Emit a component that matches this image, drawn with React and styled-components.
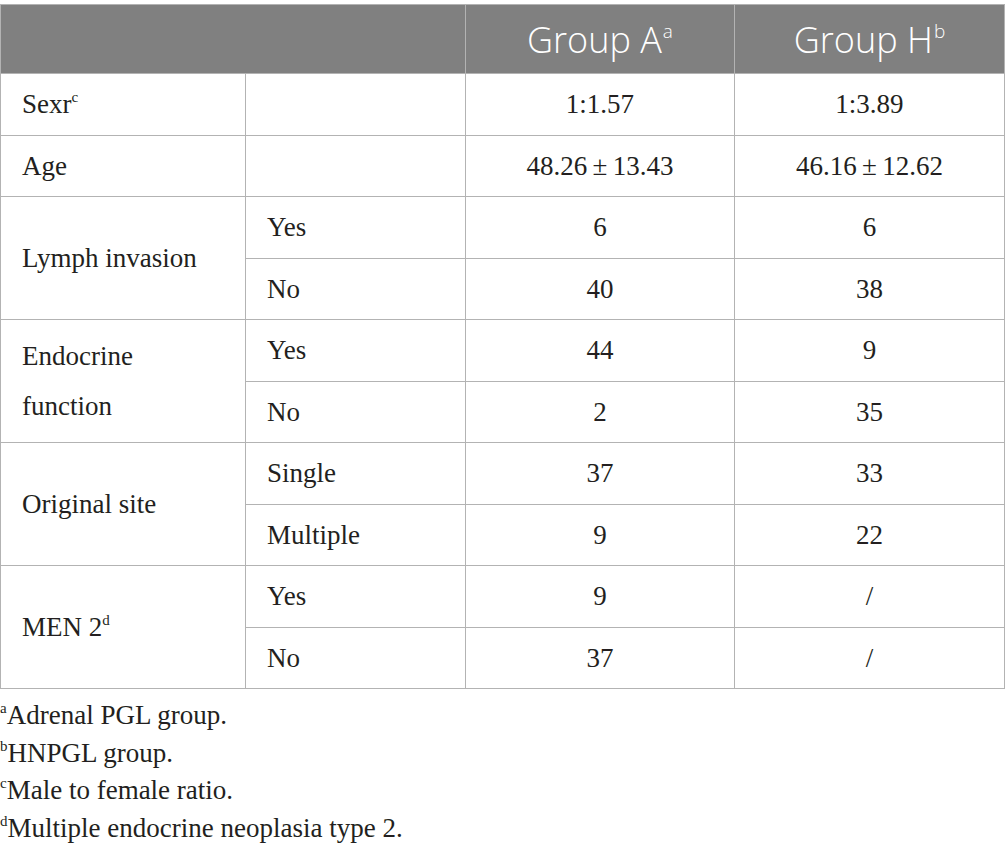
import React from 'react';
import styled, { createGlobalStyle } from 'styled-components';

const lineGray = '#b3b3b3';
const headGray = '#808080';

const GlobalStyle = createGlobalStyle`
  html, body {
    margin: 0;
    padding: 0;
    background: #ffffff;
  }
`;

const rows = [
  { label: 'Sexr', sup: 'c', items: [{ sub: '', a: '1:1.57', h: '1:3.89' }] },
  { label: 'Age', items: [{ sub: '', a: '48.26\u2009±\u200913.43', h: '46.16\u2009±\u200912.62' }] },
  {
    label: 'Lymph invasion',
    items: [
      { sub: 'Yes', a: '6', h: '6' },
      { sub: 'No', a: '40', h: '38' },
    ],
  },
  {
    label: 'Endocrine function',
    items: [
      { sub: 'Yes', a: '44', h: '9' },
      { sub: 'No', a: '2', h: '35' },
    ],
  },
  {
    label: 'Original site',
    items: [
      { sub: 'Single', a: '37', h: '33' },
      { sub: 'Multiple', a: '9', h: '22' },
    ],
  },
  {
    label: 'MEN 2',
    sup: 'd',
    items: [
      { sub: 'Yes', a: '9', h: '/' },
      { sub: 'No', a: '37', h: '/' },
    ],
  },
];

const notes = [
  { mark: 'a', text: 'Adrenal PGL group.' },
  { mark: 'b', text: 'HNPGL group.' },
  { mark: 'c', text: 'Male to female ratio.' },
  { mark: 'd', text: 'Multiple endocrine neoplasia type 2.' },
];

export default function App() {
  return (
    <Page>
      <GlobalStyle />
      <Table>
        <colgroup>
          <col style={{ width: 245 }} />
          <col style={{ width: 220 }} />
          <col style={{ width: 269 }} />
          <col style={{ width: 270 }} />
        </colgroup>
        <thead>
          <tr>
            <HeadCell colSpan={2} />
            <HeadCell divided>
              Group A<HeadSup>a</HeadSup>
            </HeadCell>
            <HeadCell divided>
              Group H<HeadSup>b</HeadSup>
            </HeadCell>
          </tr>
        </thead>
        <tbody>
          {rows.map((row) =>
            row.items.map((item, i) => (
              <Row key={row.label + i}>
                {i === 0 && (
                  <LabelCell rowSpan={row.items.length}>
                    {row.label}
                    {row.sup && <Sup>{row.sup}</Sup>}
                  </LabelCell>
                )}
                <LabelCell>{item.sub}</LabelCell>
                <ValueCell>{item.a}</ValueCell>
                <ValueCell>{item.h}</ValueCell>
              </Row>
            ))
          )}
        </tbody>
      </Table>
      <Notes>
        {notes.map((n) => (
          <Note key={n.mark}>
            <Sup>{n.mark}</Sup>
            {n.text}
          </Note>
        ))}
      </Notes>
    </Page>
  );
}

const Page = styled.div`
  width: 1005px;
  padding-top: 4px;
  font-family: "Liberation Serif", "Times New Roman", serif;
  color: #231f20;
`;

const Table = styled.table`
  width: 1005px;
  border-collapse: collapse;
  table-layout: fixed;
  border: 1px solid ${lineGray};
`;

const HeadCell = styled.th`
  height: 68px;
  padding: 0;
  background: ${headGray};
  color: #ffffff;
  font-family: "Open Sans", "Liberation Sans", sans-serif;
  font-weight: 300;
  font-size: 36px;
  text-align: center;
  vertical-align: middle;
  border: 1px solid ${lineGray};
  border-left: ${(p) => (p.divided ? `1px solid ${lineGray}` : 'none')};
`;

const HeadSup = styled.sup`
  font-size: 19px;
  vertical-align: 15px;
  line-height: 0;
  margin-left: 1px;
`;

const Row = styled.tr`
  height: 61.5px;
`;

const Cell = styled.td`
  border: 1px solid ${lineGray};
  font-size: 27px;
  line-height: 50px;
  vertical-align: middle;
`;

const LabelCell = styled(Cell)`
  padding: 0 21px;
  text-align: left;
`;

const ValueCell = styled(Cell)`
  padding: 0 8px;
  text-align: center;
`;

const Sup = styled.sup`
  font-size: 15px;
  vertical-align: 11px;
  line-height: 0;
`;

const Notes = styled.div`
  padding-top: 8px;
`;

const Note = styled.div`
  font-size: 27px;
  line-height: 37.5px;
`;
